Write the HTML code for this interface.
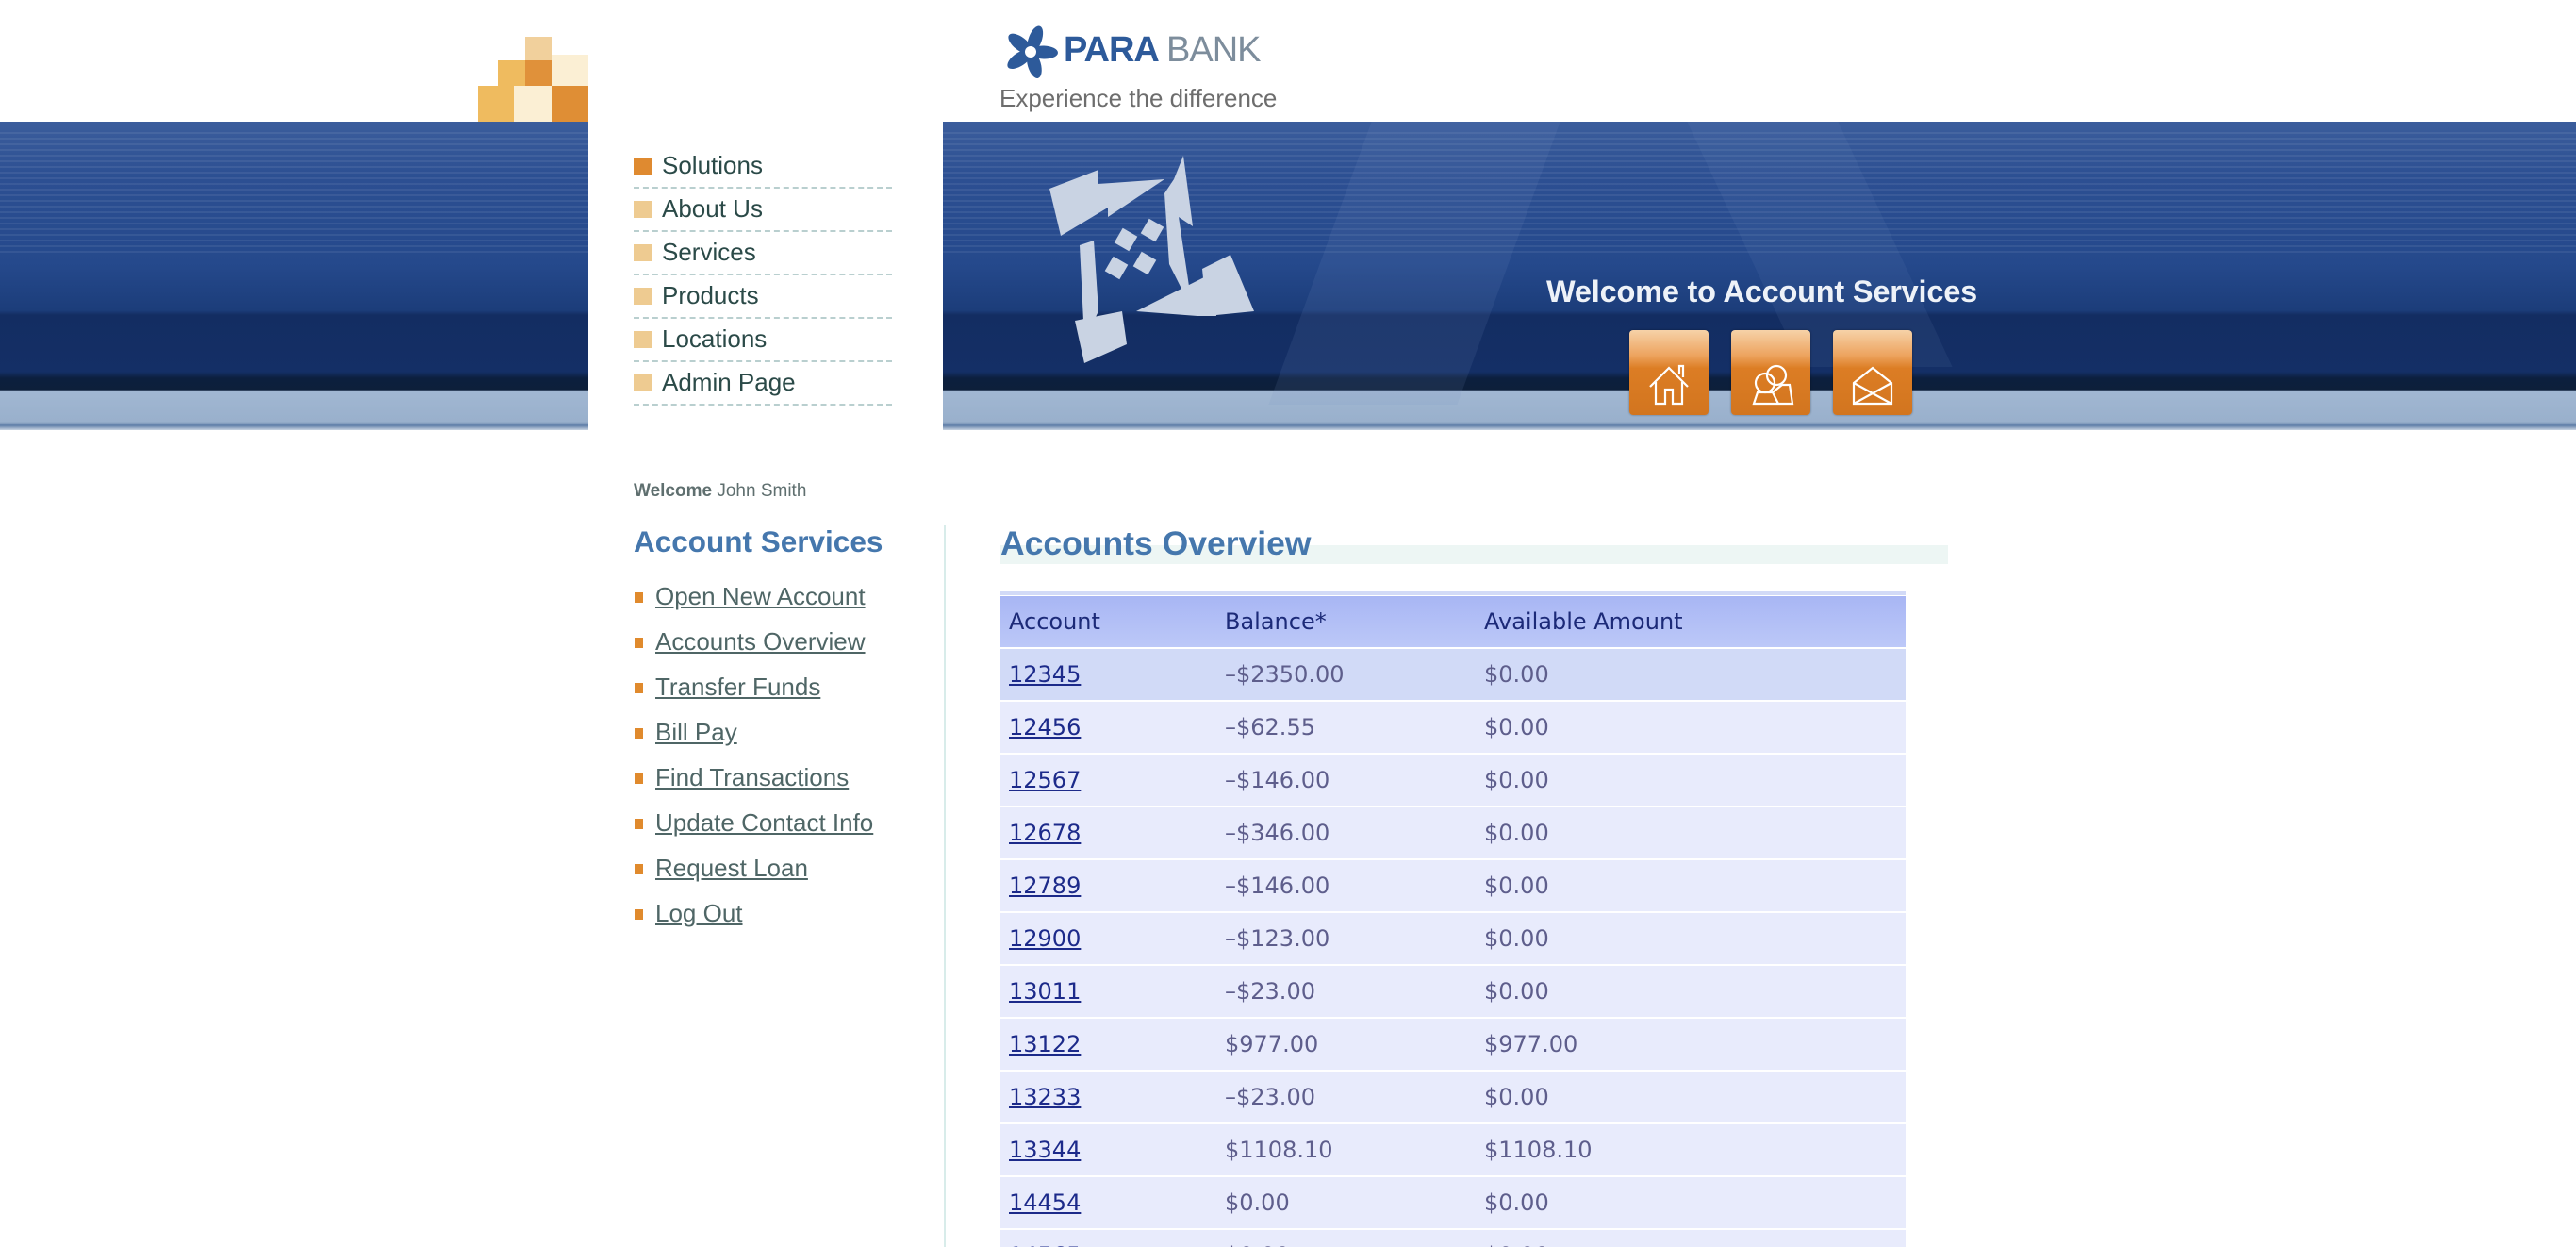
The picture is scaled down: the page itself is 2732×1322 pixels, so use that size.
<!DOCTYPE html>
<html style="width:2732px;height:1322px;overflow:hidden"><head><meta charset="utf-8"><style>
*{margin:0;padding:0;box-sizing:border-box}
body{width:2732px;height:1322px;overflow:hidden;background:#fff;font-family:"Liberation Sans",Arial,sans-serif;position:relative}
.abs{position:absolute}
.band{top:129px;height:327px;left:0;width:2732px;background:linear-gradient(to bottom,#3b5d9c 0px,#2c4f92 60px,#25498c 150px,#1c3d7a 200px,#132d62 205px,#142f66 265px,#0c1f3e 272px,#0d1f3a 284px,#a1b7d2 286px,#99b0cc 318px,#5f7ea8 322px,#c8d4e2 327px)}
.stripes{top:140px;height:130px;left:0;width:2732px;background:repeating-linear-gradient(to bottom,rgba(255,255,255,.07) 0 2px,transparent 2px 6px)}
.navcol{left:624px;top:129px;width:376px;height:400px;background:linear-gradient(to bottom,#fff 0,#fff 82%,rgba(255,255,255,0) 100%)}
.nav{left:672px;font-size:26px;color:#2b4a48}
.nav div{height:46px;border-bottom:2px dashed #b9cfcf;width:274px;position:relative;padding-left:30px;line-height:42px}
.nav div:before{content:"";position:absolute;left:0;top:13px;width:20px;height:18px;background:#eecb91}
.nav div.first:before{background:#df8a30}
.btn{top:350px;width:84px;height:90px;border-radius:4px;background:linear-gradient(to bottom,#f6d2a8 0,#eda35e 30%,#dc7d24 45%,#d2751f 100%);box-shadow:0 0 2px rgba(0,0,0,.4)}
.btn svg{position:absolute;left:0;top:0}
.side a{display:block;color:#4f6666;font-size:26px;text-decoration:underline;height:48px;position:relative;padding-left:23px}
.side a:before{content:"";position:absolute;left:1px;top:11px;width:9px;height:11px;background:#e08a2d}
table{border-collapse:separate;border-spacing:0 2px;font-family:"DejaVu Sans",sans-serif;font-size:24px}
td,th{height:54px;text-align:left;font-weight:normal;padding-left:9px;color:#5e5e8c}
th{color:#1c2a78;background:linear-gradient(to bottom,#a8b6f4,#bcc8f8)}
td a{color:#1c2a8a;text-decoration:underline}
tr.r td{background:#e8ebfc}
tr.f td{background:#d1daf7}
</style></head><body>
<div class="abs" style="left:557px;top:39px;width:28px;height:25px;background:#f1d09c"></div>
<div class="abs" style="left:528px;top:64px;width:29px;height:27px;background:#efbb5f"></div>
<div class="abs" style="left:557px;top:64px;width:28px;height:27px;background:#e0913a"></div>
<div class="abs" style="left:585px;top:58px;width:39px;height:33px;background:#fbefd4"></div>
<div class="abs" style="left:507px;top:91px;width:38px;height:38px;background:#efbb5f"></div>
<div class="abs" style="left:545px;top:91px;width:40px;height:38px;background:#fbefd4"></div>
<div class="abs" style="left:585px;top:91px;width:39px;height:38px;background:#df8e35"></div>
<svg class="abs" style="left:1061px;top:24px" width="64" height="62" viewBox="0 0 64 62">
<g fill="#2d5a9a" transform="translate(32,31)">
<ellipse rx="7" ry="15" transform="rotate(20) translate(0,-14)"/>
<ellipse rx="7" ry="15" transform="rotate(92) translate(0,-14)"/>
<ellipse rx="7" ry="15" transform="rotate(164) translate(0,-14)"/>
<ellipse rx="7" ry="15" transform="rotate(236) translate(0,-14)"/>
<ellipse rx="7" ry="15" transform="rotate(308) translate(0,-14)"/>
</g><circle cx="32" cy="31" r="6" fill="#fff"/></svg>
<div class="abs" style="left:1128px;top:32px;font-size:38px;font-weight:bold;color:#2d5a9a;letter-spacing:-1px">PARA <span style="font-weight:normal;color:#7d8d9c">BANK</span></div>
<div class="abs" style="left:1060px;top:89px;font-size:26px;color:#6d6d6d">Experience the difference</div>
<div class="abs band"></div>
<div class="abs stripes"></div>
<div class="abs" style="left:1400px;top:129px;width:200px;height:300px;background:rgba(120,150,200,.12);transform:skewX(-20deg)"></div>
<div class="abs" style="left:1850px;top:129px;width:160px;height:260px;background:rgba(120,150,200,.10);transform:skewX(25deg)"></div>
<svg class="abs" style="left:1105px;top:160px" width="235" height="230" viewBox="0 0 235 230">
<g fill="#c9d3e3">
<polygon points="8,40 60,20 60,35 130,30 70,70 70,60 20,90"/>
<polygon points="150,5 160,80 145,70 160,170 135,120 130,45 140,30"/>
<polygon points="40,100 45,200 60,170 55,95"/>
<polygon points="100,170 180,130 185,175 165,175"/>
<polygon points="200,110 225,170 175,175 170,125"/>
<polygon points="35,180 85,170 90,205 45,225"/>
<rect x="80" y="85" width="18" height="18" transform="rotate(30 89 94)"/>
<rect x="108" y="75" width="18" height="18" transform="rotate(30 117 84)"/>
<rect x="70" y="115" width="18" height="18" transform="rotate(30 79 124)"/>
<rect x="100" y="110" width="18" height="18" transform="rotate(30 109 119)"/>
</g></svg>
<div class="abs" style="left:1640px;top:291px;font-size:32.5px;color:#eef2f8;font-weight:bold;letter-spacing:-0.2px">Welcome to Account Services</div>
<div class="abs btn" style="left:1728px"><svg width="84" height="90" viewBox="0 0 84 90" fill="none" stroke="#fff" stroke-width="2.2"><path d="M22 60 L42 40 L62 60 M28 55 V78 H38 V63 H46 V78 H56 V55 M53 46 V38 H57 V50"/></svg></div>
<div class="abs btn" style="left:1836px"><svg width="84" height="90" viewBox="0 0 84 90" fill="none" stroke="#fff" stroke-width="2.2"><circle cx="36" cy="56" r="10"/><circle cx="48" cy="48" r="10"/><path d="M24 78 L28 66 H44 L50 78 Z M44 66 L54 58 H62 L65 78 H50"/></svg></div>
<div class="abs btn" style="left:1944px"><svg width="84" height="90" viewBox="0 0 84 90" fill="none" stroke="#fff" stroke-width="2.2"><path d="M22 56 L42 40 L62 56 V78 H22 Z M22 56 L62 78 M62 56 L22 78"/></svg></div>
<div class="abs navcol"></div>
<div class="abs nav" style="top:154px">
<div class="first">Solutions</div><div>About Us</div><div>Services</div><div>Products</div><div>Locations</div><div>Admin Page</div>
</div>
<div class="abs" style="left:672px;top:510px;font-size:19px;color:#5f6f6f"><b>Welcome</b> John Smith</div>
<div class="abs" style="left:672px;top:556px;font-size:31.5px;font-weight:bold;color:#4577ad">Account Services</div>
<div class="abs side" style="left:672px;top:617px">
<a>Open New Account</a><a>Accounts Overview</a><a>Transfer Funds</a><a>Bill Pay</a><a>Find Transactions</a><a>Update Contact Info</a><a>Request Loan</a><a>Log Out</a>
</div>
<div class="abs" style="left:1001px;top:557px;width:2px;height:765px;background:#d8ecea"></div>
<div class="abs" style="left:1061px;top:578px;width:1005px;height:20px;background:#edf6f4"></div>
<div class="abs" style="left:1061px;top:556px;font-size:35.5px;font-weight:bold;color:#4577ad">Accounts Overview</div>
<div class="abs" style="left:1061px;top:627px;width:960px;height:4px;background:#d2daf7"></div>
<table class="abs" style="left:1061px;top:630px;width:960px">
<tr><th style="width:229px">Account</th><th style="width:275px">Balance*</th><th>Available Amount</th></tr>
<tr class="f"><td><a>12345</a></td><td>–$2350.00</td><td>$0.00</td></tr>
<tr class="r"><td><a>12456</a></td><td>–$62.55</td><td>$0.00</td></tr>
<tr class="r"><td><a>12567</a></td><td>–$146.00</td><td>$0.00</td></tr>
<tr class="r"><td><a>12678</a></td><td>–$346.00</td><td>$0.00</td></tr>
<tr class="r"><td><a>12789</a></td><td>–$146.00</td><td>$0.00</td></tr>
<tr class="r"><td><a>12900</a></td><td>–$123.00</td><td>$0.00</td></tr>
<tr class="r"><td><a>13011</a></td><td>–$23.00</td><td>$0.00</td></tr>
<tr class="r"><td><a>13122</a></td><td>$977.00</td><td>$977.00</td></tr>
<tr class="r"><td><a>13233</a></td><td>–$23.00</td><td>$0.00</td></tr>
<tr class="r"><td><a>13344</a></td><td>$1108.10</td><td>$1108.10</td></tr>
<tr class="r"><td><a>14454</a></td><td>$0.00</td><td>$0.00</td></tr>
<tr class="r"><td><a>14565</a></td><td>$0.00</td><td>$0.00</td></tr>
</table>
</body></html>
